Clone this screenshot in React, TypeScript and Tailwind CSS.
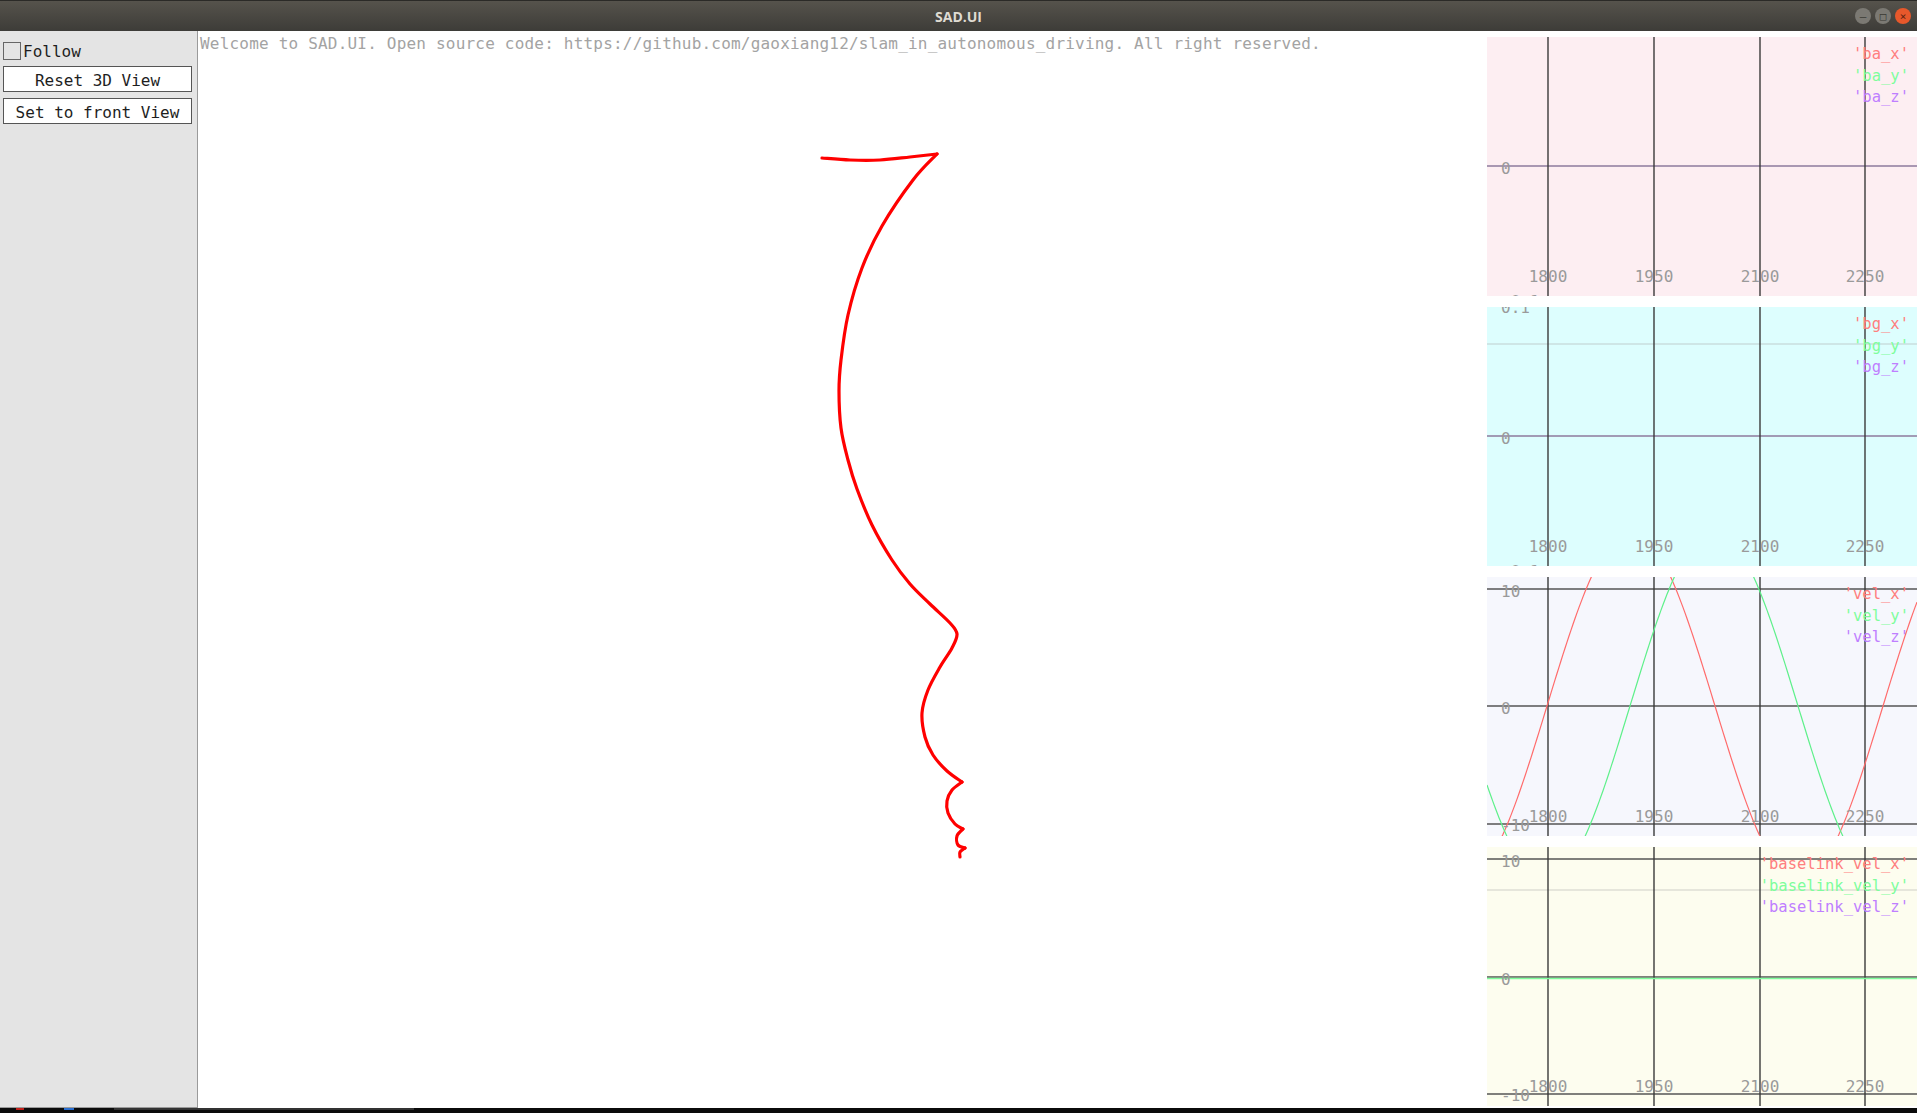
import { ReactElement } from 'react';

const MONO = '"DejaVu Sans Mono", "Liberation Mono", monospace';

type Pt = [number, number];

// catmull-rom through the points, gives a smooth svg path
const smooth = (pts: Pt[]) => {
	let d = `M${pts[0][0]},${pts[0][1]}`;
	for (let i = 0; i < pts.length - 1; i++) {
		const p0 = pts[i - 1] || pts[i];
		const p1 = pts[i];
		const p2 = pts[i + 1];
		const p3 = pts[i + 2] || p2;
		const c1x = p1[0] + (p2[0] - p0[0]) / 6;
		const c1y = p1[1] + (p2[1] - p0[1]) / 6;
		const c2x = p2[0] - (p3[0] - p1[0]) / 6;
		const c2y = p2[1] - (p3[1] - p1[1]) / 6;
		d += ` C${c1x},${c1y} ${c2x},${c2y} ${p2[0]},${p2[1]}`;
	}
	return d;
};

const trajectory: Pt[][] = [
	[
		[822, 158],
		[850, 160],
		[880, 160],
		[910, 157],
		[937, 154],
	],
	[
		[937, 154],
		[913, 180],
		[882, 226],
		[862, 268],
		[848, 315],
		[841, 360],
		[839, 391],
		[841, 428],
		[848, 460],
		[857, 489],
		[872, 525],
		[892, 560],
		[910, 584],
		[930, 604],
		[950, 623],
		[957, 634],
		[952, 648],
		[940, 667],
		[928, 690],
		[922, 713],
		[925, 737],
		[933, 755],
		[947, 771],
		[962, 782],
	],
	[
		[962, 782],
		[952, 790],
		[947, 801],
		[948, 813],
		[955, 824],
		[963, 829],
	],
	[
		[963, 829],
		[957, 836],
		[958, 845],
		[965, 848],
	],
	[
		[965, 848],
		[960, 852],
		[960, 857],
	],
];

const wave = (zero: number) => {
	const pts: string[] = [];
	for (let x = 0; x <= 430; x += 2) {
		const y = 129 - 175 * Math.sin((2 * Math.PI * (x - zero)) / 336);
		pts.push(`${x},${y.toFixed(1)}`);
	}
	return pts.join(' ');
};

type HLine = { y: number; color: string };
type YLabel = { y: number; text: string };

type ChartProps = {
	bg: string;
	lines: HLine[];
	labels: YLabel[];
	legend: string[];
	waves?: boolean;
	extra?: ReactElement;
};

const GRID_X = [61, 167, 273, 378];
const TICKS = ['1800', '1950', '2100', '2250'];
const LEGEND_COLORS = ['#ff7f7f', '#7ffd9c', '#bf7fff'];

const Chart = ({ bg, lines, labels, legend, waves, extra }: ChartProps) => {
	return (
		<div className={`relative h-[259px] w-[430px] overflow-hidden ${bg}`}>
			<svg width={430} height={259} className="absolute left-0 top-0" style={{ fontFamily: MONO }}>
				{lines.map((l, i) => (
					<line key={i} x1={0} x2={430} y1={l.y} y2={l.y} stroke={l.color} strokeWidth={1.3} />
				))}
				{GRID_X.map((x) => (
					<line key={x} x1={x} x2={x} y1={0} y2={259} stroke="#3a3a3a" strokeWidth={1.4} />
				))}
				{extra}
				{waves && (
					<>
						<polyline points={wave(60)} fill="none" stroke="#ff6b6b" strokeWidth={1.2} />
						<polyline points={wave(143)} fill="none" stroke="#5ef08a" strokeWidth={1.2} />
					</>
				)}
				{TICKS.map((t, i) => (
					<text key={t} x={GRID_X[i]} y={245} textAnchor="middle" fontSize={16} fill="#9a9a9a">
						{t}
					</text>
				))}
				{labels.map((l, i) => (
					<text key={i} x={14} y={l.y} fontSize={16} fill="#9a9a9a">
						{l.text}
					</text>
				))}
				{legend.map((name, i) => (
					<text key={name} x={422} y={22 + i * 21.5} textAnchor="end" fontSize={15.5} fill={LEGEND_COLORS[i]}>
						'{name}'
					</text>
				))}
			</svg>
		</div>
	);
};

const WinButton = ({ glyph, close }: { glyph: string; close?: boolean }) => (
	<div
		className={`flex h-[16px] w-[16px] items-center justify-center rounded-full text-[11px] leading-none ${
			close ? 'bg-[#e7582b] text-[#5a2210]' : 'bg-[#7b7973] text-[#3a3934]'
		}`}
	>
		{glyph}
	</div>
);

const App = () => {
	return (
		<div className="flex h-[1113px] w-[1917px] flex-col overflow-hidden bg-white" style={{ fontFamily: MONO }}>
			{/* title bar */}
			<div className="relative flex h-[31px] shrink-0 items-center justify-center border-t border-[#2b2a27] bg-gradient-to-b from-[#56534c] to-[#3d3c38]">
				<span className="text-[14px] font-bold text-[#dfdbd2]" style={{ fontFamily: '"Open Sans", "Noto Sans", sans-serif' }}>
					SAD.UI
				</span>
				<div className="absolute right-[6px] top-[7px] flex gap-[4px]">
					<WinButton glyph="—" />
					<WinButton glyph="□" />
					<WinButton glyph="×" close />
				</div>
			</div>

			<div className="flex min-h-0 flex-1">
				{/* side panel */}
				<div className="flex w-[198px] shrink-0 flex-col gap-[6px] border-r border-b border-[#9a9a9a] bg-[#e4e4e4] px-[3px] pt-[10px] text-[16px] leading-none text-[#1e1e1e]">
					<div className="flex h-[19px] items-center gap-[2px]">
						<div className="h-[18px] w-[18px] border border-[#666]" />
						<span className="pt-[2px]">Follow</span>
					</div>
					<button className="h-[26px] w-[189px] border border-[#555] bg-white pt-[3px] text-[16px] leading-none">Reset 3D View</button>
					<button className="h-[26px] w-[189px] border border-[#555] bg-white pt-[3px] text-[16px] leading-none">Set to front View</button>
				</div>

				{/* 3d view */}
				<div className="relative min-w-0 flex-1">
					<div className="relative z-10 pl-[2px] pt-[5px] text-[16px] leading-[16px] tracking-[0.2px] text-[#a3a3a3]">
						Welcome to SAD.UI. Open source code: https://github.com/gaoxiang12/slam_in_autonomous_driving. All right reserved.
					</div>
					<svg width={1289} height={1077} viewBox="198 31 1289 1077" className="absolute left-0 top-0">
						{trajectory.map((seg, i) => (
							<path key={i} d={smooth(seg)} fill="none" stroke="#ff0000" strokeWidth={3.2} strokeLinecap="round" strokeLinejoin="round" />
						))}
					</svg>
				</div>

				{/* plotters */}
				<div className="flex w-[430px] shrink-0 flex-col gap-[11px] pt-[6px]">
					<Chart
						bg="bg-[#fdeef2]"
						lines={[{ y: 129, color: '#8d7a9c' }]}
						labels={[
							{ y: 137, text: '0' },
							{ y: 270, text: '-0.1' },
						]}
						legend={['ba_x', 'ba_y', 'ba_z']}
					/>
					<Chart
						bg="bg-[#ddfefe]"
						lines={[
							{ y: 37, color: '#c9dede' },
							{ y: 129, color: '#8d7a9c' },
						]}
						labels={[
							{ y: 6, text: '0.1' },
							{ y: 137, text: '0' },
							{ y: 270, text: '-0.1' },
						]}
						legend={['bg_x', 'bg_y', 'bg_z']}
					/>
					<Chart
						bg="bg-[#f6f7fd]"
						lines={[
							{ y: 12, color: '#555' },
							{ y: 129, color: '#555' },
							{ y: 247, color: '#555' },
						]}
						labels={[
							{ y: 20, text: '10' },
							{ y: 137, text: '0' },
							{ y: 254, text: '-10' },
						]}
						legend={['vel_x', 'vel_y', 'vel_z']}
						waves
					/>
					<Chart
						bg="bg-[#fdfdef]"
						lines={[
							{ y: 12, color: '#555' },
							{ y: 43, color: '#deded4' },
							{ y: 130, color: '#555' },
							{ y: 247, color: '#555' },
						]}
						labels={[
							{ y: 20, text: '10' },
							{ y: 138, text: '0' },
							{ y: 254, text: '-10' },
						]}
						legend={['baselink_vel_x', 'baselink_vel_y', 'baselink_vel_z']}
						extra={<line x1={0} x2={430} y1={131.5} y2={131.5} stroke="#7ffd9c" strokeWidth={1.3} />}
					/>
				</div>
			</div>

			{/* taskbar edge */}
			<div className="flex h-[5px] shrink-0 items-start gap-[40px] bg-[#0b0b0b] pl-[16px]">
				<div className="h-[2px] w-[8px] bg-[#c0201a]" />
				<div className="h-[2px] w-[10px] bg-[#2a6fd0]" />
				<div className="h-[2px] w-[300px] bg-[#333]" />
			</div>
		</div>
	);
};

export default App;
